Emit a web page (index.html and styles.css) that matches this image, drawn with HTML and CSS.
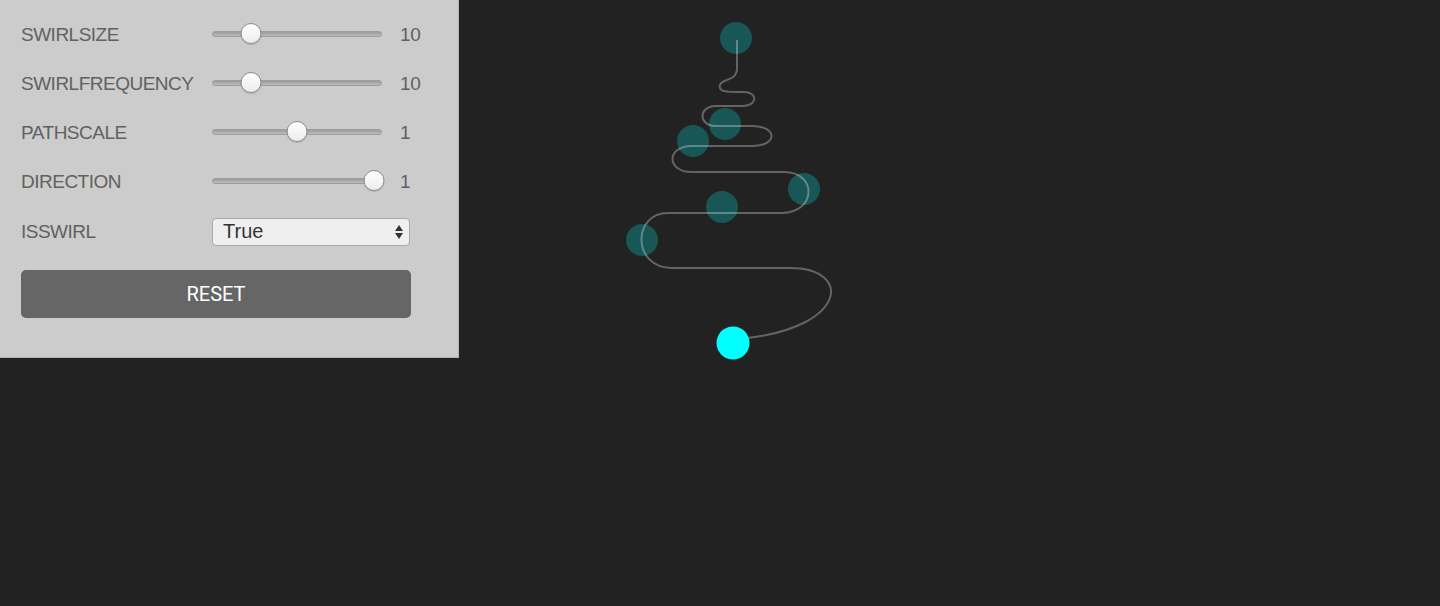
FILE: index.html
```html
<!DOCTYPE html>
<html>
<head>
<meta charset="utf-8">
<link rel="stylesheet" href="styles.css">
</head>
<body>
<div class="stage">
  <svg class="canvas" width="1440" height="606" viewBox="0 0 1440 606">
    <g class="ghost">
      <circle cx="736" cy="38" r="16"/>
      <circle cx="725" cy="124" r="16"/>
      <circle cx="693" cy="141" r="16"/>
      <circle cx="804" cy="189" r="16"/>
      <circle cx="722" cy="207" r="16"/>
      <circle cx="642" cy="240" r="16"/>
    </g>
    <path class="trail" d="M737 40 V68 C737 82 722 78 720 85 C718 92 728 92 738 92 L744 92 C758 92 758 106 742 106 L716 106 C698 106 698 126 716 126 L752 126 C778 126 778 146 752 146 L692 146 C666 146 666 172 692 172 L784 172 C818 172 816 213 782 213 L668 213 C632 213 632 268 672 268 L790 268 C852 268 848 326 748 338"/>
    <circle class="head" cx="733" cy="343" r="16.5"/>
  </svg>

  <div class="panel">
    <div class="row">
      <span class="label">SWIRLSIZE</span>
      <div class="slider"><div class="rail"><span class="thumb" style="left:19%"></span></div></div>
      <span class="value">10</span>
    </div>
    <div class="row">
      <span class="label">SWIRLFREQUENCY</span>
      <div class="slider"><div class="rail"><span class="thumb" style="left:19%"></span></div></div>
      <span class="value">10</span>
    </div>
    <div class="row">
      <span class="label">PATHSCALE</span>
      <div class="slider"><div class="rail"><span class="thumb" style="left:50%"></span></div></div>
      <span class="value">1</span>
    </div>
    <div class="row">
      <span class="label">DIRECTION</span>
      <div class="slider"><div class="rail"><span class="thumb" style="left:102%"></span></div></div>
      <span class="value">1</span>
    </div>
    <div class="row row-select">
      <span class="label">ISSWIRL</span>
      <div class="select">
        <span>True</span>
        <svg class="arrows" width="10" height="16" viewBox="0 0 10 16"><path d="M5 1 L9 7 H1 Z M5 15 L9 9 H1 Z"/></svg>
      </div>
    </div>
    <button class="reset">RESET</button>
  </div>
</div>
</body>
</html>
```

FILE: styles.css
```css
html, body {
  margin: 0;
  padding: 0;
  background: #222222;
  height: 100%;
  overflow: hidden;
}

.stage {
  position: relative;
  width: 1440px;
  height: 606px;
}

.canvas {
  position: absolute;
  left: 0;
  top: 0;
}

.ghost circle {
  fill: rgba(0, 255, 255, 0.24);
}

.trail {
  fill: none;
  stroke: rgba(255, 255, 255, 0.3);
  stroke-width: 2;
}

.head {
  fill: #00ffff;
}

.panel {
  position: relative;
  width: 416px;
  padding: 10px 21px 39px 21px;
  background: #cccccc;
  border-right: 1px solid #b4b4b4;
  border-bottom: 1px solid #b4b4b4;
  font-family: "Liberation Sans", Arial, sans-serif;
  display: flex;
  flex-direction: column;
}

.row {
  height: 49px;
  display: flex;
  align-items: center;
}

.row-select {
  margin-top: 1px;
}

.label {
  width: 191px;
  font-size: 19px;
  letter-spacing: -0.5px;
  color: #616161;
}

.slider {
  width: 170px;
  height: 22px;
  display: flex;
  align-items: center;
  position: relative;
}

.slider::before {
  content: "";
  position: absolute;
  left: 0;
  right: 0;
  top: 7px;
  height: 4px;
  border-radius: 3px;
  background: linear-gradient(#9a9a9a, #bdbdbd);
  border: 1px solid #9d9d9d;
  box-sizing: content-box;
}

.rail {
  position: relative;
  margin: 0 11px;
  flex: 1;
  height: 22px;
}

.thumb {
  position: absolute;
  top: -1px;
  width: 21px;
  height: 21px;
  border-radius: 50%;
  transform: translateX(-50%);
  background: linear-gradient(#ffffff, #ececec);
  border: 1px solid #8d8d8d;
  box-sizing: border-box;
  box-shadow: 0 1px 1px rgba(0, 0, 0, 0.15);
}

.value {
  margin-left: 18px;
  font-size: 19px;
  letter-spacing: -0.3px;
  color: #616161;
}

.select {
  width: 198px;
  height: 28px;
  box-sizing: border-box;
  border: 1px solid #a9a9a9;
  border-radius: 4px;
  background: #efefef;
  display: flex;
  align-items: center;
  justify-content: space-between;
  padding: 0 5px 0 10px;
  font-size: 20px;
  color: #333333;
}

.arrows path {
  fill: #333333;
}

.reset {
  margin-top: 14px;
  width: 390px;
  height: 48px;
  border: none;
  border-radius: 5px;
  background: #666666;
  color: #ffffff;
  font-family: Roboto, "Liberation Sans", sans-serif;
  font-size: 20px;
  padding: 0;
}
```
